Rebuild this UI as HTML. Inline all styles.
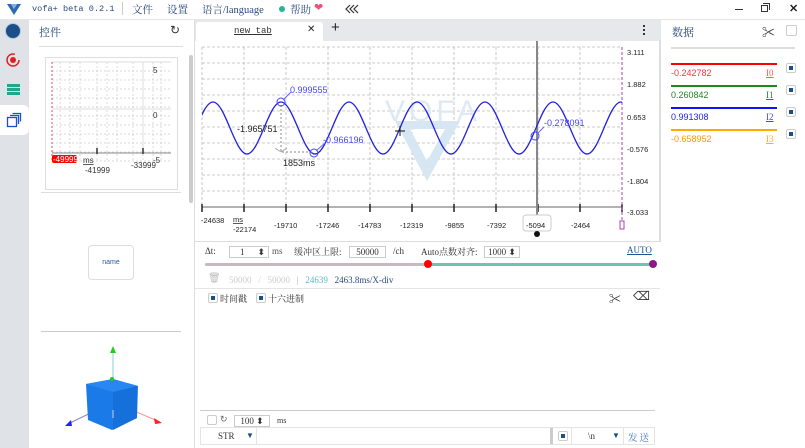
<!DOCTYPE html>
<html><head><meta charset="utf-8"><style>
*{margin:0;padding:0;box-sizing:border-box}
body{width:805px;height:448px;overflow:hidden;background:#fff;font-family:"Liberation Serif","Noto Serif CJK SC",serif;font-size:10px;color:#333;position:relative}
.a{position:absolute;white-space:nowrap}
.s{font-family:"Liberation Sans","Noto Sans CJK SC",sans-serif}
.hl{position:absolute;height:1px;background:#d6d6d6}
.cb{position:absolute;width:10px;height:10px;border:1px solid #ccc;border-radius:2px;background:#fff}
.cb i{position:absolute;left:2px;top:2px;width:4px;height:4px;background:#1a4f8a}
.inp{position:absolute;border:1px solid #ccc;height:12px;font-size:9px;text-align:center;line-height:10px;background:#fff}
</style></head><body>
<!-- top bar -->
<div class="a" style="left:0;top:0;width:805px;height:20px;background:#fff;border-bottom:1px solid #e6e6e6"></div>
<svg class="a" style="left:6px;top:3px" width="16" height="13" viewBox="0 0 16 13"><path d="M1 1 L8 12 L15 1 L11 1 L8 6 L5 1 Z" fill="#2a6ab0"/><path d="M5 1 L8 6 L11 1" fill="#7fb0e0"/></svg>
<div class="a" style="left:32px;top:4px;font-size:8.6px;color:#2a4a7a;font-family:'Liberation Mono',monospace">vofa+ beta 0.2.1</div>
<div class="a" style="left:122px;top:2px;width:1px;height:13px;background:#ccc"></div>
<div class="a" style="left:132px;top:2px;font-size:10.5px;color:#2a4a7a">文件</div>
<div class="a" style="left:167px;top:2px;font-size:10.5px;color:#2a4a7a">设置</div>
<div class="a" style="left:202px;top:2px;font-size:10.5px;color:#2a4a7a">语言/language</div>
<div class="a" style="left:279px;top:6px;width:6px;height:6px;border-radius:3px;background:#2bb39a"></div>
<div class="a" style="left:290px;top:2px;font-size:10.5px;color:#2a4a7a">帮助</div>
<div class="a" style="left:314px;top:1px;font-size:11px;color:#f0507a">❤</div>
<svg class="a" style="left:345px;top:4px" width="14" height="10"><path d="M5 1 L1 5 L5 9 M9 1 L5 5 L9 9 M13 1 L9 5 L13 9" stroke="#333" stroke-width="1.2" fill="none"/></svg>
<div class="a" style="left:735px;top:9px;width:8px;height:1px;background:#333"></div>
<div class="a" style="left:761px;top:5px;width:7px;height:7px;border:1px solid #333"></div>
<div class="a" style="left:763px;top:3px;width:7px;height:7px;border-top:1px solid #333;border-right:1px solid #333"></div>
<div class="a s" style="left:789px;top:2px;font-size:11px;color:#222;font-weight:bold">✕</div>

<!-- sidebar -->
<div class="a" style="left:0;top:20px;width:29px;height:428px;background:#dfe3e8"></div>
<div class="a" style="left:6px;top:24px;width:14px;height:14px;border-radius:7px;background:#1a4f8a;box-shadow:0 0 0 1px #b8c4d4"></div>
<svg class="a" style="left:5px;top:52px" width="16" height="16"><circle cx="8" cy="8" r="6" fill="none" stroke="#e02020" stroke-width="1.5" stroke-dasharray="30 8"/><circle cx="8" cy="8" r="3" fill="#e02020"/></svg>
<div class="a" style="left:7px;top:84px;width:13px;height:3px;background:#22a58c;box-shadow:0 4px 0 #22a58c,0 8px 0 #22a58c"></div>
<div class="a" style="left:0;top:105px;width:29px;height:30px;background:#fff;border-radius:0 6px 6px 0"></div>
<svg class="a" style="left:6px;top:112px" width="16" height="16"><rect x="1.5" y="5.5" width="9" height="9" fill="none" stroke="#1a50d0" stroke-width="1.3"/><path d="M4 3.5 H12.5 V12 M6.5 1.5 H14.5 V9.5" fill="none" stroke="#1a50d0" stroke-width="1.3"/></svg>

<!-- left panel -->
<div class="a" style="left:39px;top:24px;font-size:11px;color:#2a4a7a">控件</div>
<div class="a s" style="left:170px;top:23px;font-size:12px;color:#333">↻</div>
<div class="hl" style="left:39px;top:46px;width:144px;background:#ddd"></div>
<div class="a" style="left:189px;top:55px;width:4px;height:148px;background:#ccc;border-radius:2px"></div>
<div class="a" style="left:45px;top:57px;width:133px;height:133px;border:1px solid #ddd"></div>
<svg class="a" style="left:45px;top:57px" width="133" height="133">
<g stroke="#ccc" stroke-dasharray="2 2" stroke-width="0.7">
<path d="M7 5 H126 M7 14 H126 M7 23 H126 M7 32 H126 M7 41 H126 M7 50 H126 M7 59 H126 M7 68 H126 M7 77 H126 M7 86 H126 M7 95 H126 M7 104 H126"/>
<path d="M15 5V104 M25 5V104 M35 5V104 M52 5V104 M62 5V104 M72 5V104 M88 5V104 M98 5V104 M108 5V104 M116 5V104"/>
</g>
<path d="M7 5H126 M7 52H126 M7 96H126" stroke="#ddd"/>
<path d="M98 5V96" stroke="#ddd"/>
<path d="M7 5V104" stroke="#f44" stroke-dasharray="2 2"/>
<path d="M7 96H126" stroke="#888"/>
<path d="M52 91V97 M98 91V97" stroke="#333" stroke-width="1.5"/>
<rect x="7" y="98" width="25" height="8" rx="2" fill="#f00"/>
<text x="8" y="105" font-size="8" fill="#fff" font-family="Liberation Sans">-49999</text>
<text x="38" y="106" font-size="8" fill="#333" font-family="Liberation Sans" text-decoration="underline">ms</text>
<text x="40" y="116" font-size="8" fill="#333" font-family="Liberation Sans">-41999</text>
<text x="86" y="111" font-size="8" fill="#333" font-family="Liberation Sans">-33999</text>
<text x="108" y="16" font-size="8" fill="#333" font-family="Liberation Sans">5</text>
<text x="108" y="61" font-size="8" fill="#333" font-family="Liberation Sans">0</text>
<text x="108" y="106" font-size="8" fill="#333" font-family="Liberation Sans">-5</text>
</svg>
<div class="hl" style="left:41px;top:192px;width:140px;background:#ddd"></div>
<div class="a s" style="left:88px;top:245px;width:46px;height:35px;border:1px solid #ddd;border-radius:4px;font-size:7px;color:#2a5a9a;text-align:center;line-height:33px">name</div>
<div class="hl" style="left:41px;top:331px;width:140px;background:#ccc"></div>
<svg class="a" style="left:60px;top:340px" width="110" height="100">
<path d="M53 10 V72" stroke="#8cd" stroke-width="1"/>
<path d="M50 13 L53 6 L56 13 Z" fill="#2c2"/>
<path d="M53 62 L8 84" stroke="#88c"/><path d="M5 86 L11 80 L12 86 Z" fill="#22f"/>
<path d="M53 62 L100 82" stroke="#e99"/><path d="M102 83 L94 78 L95 84Z" fill="#f22"/>
<path d="M26 44 L53 39 L78 46 L77 78 L52 90 L28 80 Z" fill="#1a7ae8"/>
<path d="M26 44 L53 39 L78 46 L53 52 Z" fill="#2a86f0"/>
<path d="M53 52 V90 L77 78 V46 Z" fill="#1670dc"/>
<circle cx="52" cy="39" r="2" fill="#2c2"/>
<path d="M53 70 V78" stroke="#ccd"/>
</svg>

<!-- center -->
<div class="a" style="left:194px;top:20px;width:1px;height:428px;background:#ddd"></div>
<div class="a" style="left:195px;top:20px;width:466px;height:21px;background:#e6e8eb"></div>
<div class="a" style="left:196px;top:22px;width:127px;height:19px;background:#fff;border-radius:3px 3px 0 0"></div>
<div class="a" style="left:234px;top:26px;font-size:9px;color:#333;text-decoration:underline;font-family:'Liberation Mono',monospace">new tab</div>
<div class="a s" style="left:307px;top:24px;font-size:10px;color:#222">✕</div>
<div class="a s" style="left:331px;top:19px;font-size:15px;color:#222">+</div>
<div class="a" style="left:643px;top:25px;width:2px;height:2px;background:#333;box-shadow:0 4px 0 #333,0 8px 0 #333"></div>
<div class="a" style="left:659px;top:40px;width:2px;height:202px;background:#ddd"></div>
<svg class="a" style="left:195px;top:41px" width="465" height="200">
<defs><clipPath id="c"><rect x="7" y="0" width="420" height="200"/></clipPath></defs>
<g stroke="#bbb" stroke-dasharray="3 2" stroke-width="0.8">
<path d="M7 6H427 M7 22H427 M7 38H427 M7 54H427 M7 70H427 M7 86H427 M7 102H427 M7 118H427 M7 134H427 M7 150H427"/>
<path d="M7 6V166 M49 6V166 M91 6V166 M133 6V166 M175 6V166 M217 6V166 M259 6V166 M301 6V166 M343 6V166 M385 6V166"/>
</g>
<path d="M7 166H427" stroke="#666"/>
<g stroke="#222" stroke-width="1.5"><path d="M7 163V171 M49 163V171 M91 163V171 M133 163V171 M175 163V171 M217 163V171 M259 163V171 M301 163V171 M343 163V171 M385 163V171 M427 163V171"/></g>
<path d="M427 6V180" stroke="#b040b0" stroke-dasharray="3 2"/>
<!-- watermark -->
<text x="190" y="80" font-size="30" fill="#dde9f4" font-family="Liberation Sans" letter-spacing="4">VOFA</text>
<path d="M200 80 L265 80 L232 140 Z M215 88 L232 120 L250 88 Z" fill="#d6e6f2" fill-rule="evenodd"/>
<path d="M342 -1V195" stroke="#888" stroke-width="2"/>
<g clip-path="url(#c)">
<path d="M-16 113 C-3.8 113 5.8 61 18 61 S39.8 113 52 113 S73.8 61 86 61 S107.8 113 120 113 S141.8 61 154 61 S175.8 113 188 113 S209.8 61 222 61 S243.8 113 256 113 S277.8 61 290 61 S311.8 113 324 113 S345.8 61 358 61 S379.8 113 392 113 S413.8 61 426 61 S447.8 113 460 113" fill="none" stroke="#2222e0" stroke-width="1.3"/>
</g>
<path d="M86 64V111 H119" stroke="#888" stroke-dasharray="2 2" fill="none"/>
<path d="M80 107 L86 111 M92 107 L86 111" stroke="#aaa"/>
<circle cx="86" cy="61" r="4" fill="none" stroke="#44f"/>
<circle cx="119" cy="112" r="4" fill="none" stroke="#44f"/>
<circle cx="340" cy="95" r="4" fill="none" stroke="#44f"/>
<path d="M88 59 L96 51 M121 110 L130 102 M342 93 L349 86" stroke="#66f"/>
<g font-family="Liberation Sans" font-size="9">
<text x="95" y="52" fill="#44f">0.999555</text>
<text x="128" y="102" fill="#44f">-0.966196</text>
<text x="349" y="85" fill="#44f">-0.278091</text>
<text x="42" y="91" fill="#222">-1.965751</text>
<text x="88" y="125" fill="#222">1853ms</text>
<path d="M200 90 H210 M205 85 V95" stroke="#111"/>
</g>
<g font-family="Liberation Sans" font-size="7.5" fill="#222">
<text x="432" y="14">3.111</text><text x="432" y="46">1.882</text><text x="432" y="79">0.653</text><text x="432" y="111">-0.576</text><text x="432" y="143">-1.804</text><text x="432" y="174">-3.033</text>
<text x="6" y="182">-24638</text>
<text x="38" y="181" text-decoration="underline">ms</text>
<text x="38" y="191">-22174</text>
<text x="79" y="187">-19710</text><text x="121" y="187">-17246</text><text x="163" y="187">-14783</text><text x="205" y="187">-12319</text><text x="250" y="187">-9855</text><text x="292" y="187">-7392</text><text x="376" y="187">-2464</text>
</g>
<rect x="328" y="174" width="28" height="16" rx="3" fill="#fff" stroke="#ccc"/>
<text x="331" y="187" font-family="Liberation Sans" font-size="7.5" fill="#222">-5094</text>
<circle cx="342" cy="193" r="3" fill="#111"/>
<rect x="425" y="180" width="4" height="8" fill="none" stroke="#b040b0"/>
</svg>
<div class="hl" style="left:195px;top:241px;width:465px;background:#ddd"></div>
<!-- controls -->
<div class="a" style="left:205px;top:246px;font-size:9px">Δt:</div>
<div class="inp" style="left:229px;top:246px;width:40px;text-align:left;padding-left:10px">1 <span style="float:right;padding-right:3px">⬍</span></div>
<div class="a" style="left:272px;top:246px;font-size:9px;color:#555">ms</div>
<div class="a" style="left:294px;top:245px;font-size:9px">缓冲区上限:</div>
<div class="inp" style="left:349px;top:246px;width:37px">50000</div>
<div class="a" style="left:393px;top:246px;font-size:9px">/ch</div>
<div class="a" style="left:421px;top:245px;font-size:9px">Auto点数对齐:</div>
<div class="inp" style="left:484px;top:246px;width:36px">1000 ⬍</div>
<div class="a" style="left:627px;top:245px;font-size:9px;color:#1a4f9a;text-decoration:underline">AUTO</div>
<div class="a" style="left:205px;top:263px;width:223px;height:3px;background:#c9b8be;border-radius:2px"></div>
<div class="a" style="left:428px;top:263px;width:225px;height:3px;background:#6cc5b0"></div>
<div class="a" style="left:424px;top:260px;width:8px;height:8px;border-radius:4px;background:#f00"></div>
<div class="a" style="left:649px;top:260px;width:8px;height:8px;border-radius:4px;background:#8a1a8a"></div>
<div class="a s" style="left:208px;top:273px;font-size:10px;color:#bbb">🗑</div>
<div class="a" style="left:229px;top:275px;font-size:9px;color:#ccc">50000 &nbsp; / &nbsp; 50000 &nbsp; <span style="color:#aad">|</span> &nbsp; <span style="color:#5bb">24639</span> &nbsp; <span style="color:#2a4a7a">2463.8ms/X-div</span></div>
<div class="hl" style="left:195px;top:288px;width:465px;background:#e4e4e4"></div>
<div class="cb" style="left:208px;top:293px"><i></i></div>
<div class="a" style="left:220px;top:292px;font-size:9px">时间戳</div>
<div class="cb" style="left:256px;top:293px"><i></i></div>
<div class="a" style="left:268px;top:292px;font-size:9px">十六进制</div>
<div class="a s" style="left:609px;top:290px;font-size:12px;color:#333">✂</div>
<div class="a s" style="left:633px;top:289px;font-size:12px;color:#333">⌫</div>
<div class="hl" style="left:200px;top:410px;width:455px;background:#ccc"></div>
<div class="cb" style="left:207px;top:415px"></div>
<div class="a s" style="left:220px;top:414px;font-size:9px;color:#666">↻</div>
<div class="inp" style="left:234px;top:415px;width:36px">100 ⬍</div>
<div class="a" style="left:277px;top:416px;font-size:8px">ms</div>
<div class="a" style="left:200px;top:427px;width:455px;height:18px;border:1px solid #e4e4e4"></div>
<div class="a" style="left:256px;top:427px;width:1px;height:18px;background:#e4e4e4"></div>
<div class="a" style="left:218px;top:431px;font-size:9px">STR</div>
<div class="a s" style="left:246px;top:431px;font-size:8px;color:#1a4f8a">▼</div>
<div class="a" style="left:550px;top:428px;width:3px;height:16px;background:#ccc"></div>
<div class="cb" style="left:558px;top:431px"><i></i></div>
<div class="a" style="left:571px;top:427px;width:1px;height:18px;background:#e4e4e4"></div>
<div class="a" style="left:588px;top:431px;font-size:9px">\n</div>
<div class="a s" style="left:612px;top:431px;font-size:8px;color:#1a4f8a">▼</div>
<div class="a" style="left:623px;top:427px;width:1px;height:18px;background:#e4e4e4"></div>
<div class="a" style="left:628px;top:430px;font-size:9.5px;color:#4a7ac0;letter-spacing:2px">发送</div>

<!-- right panel -->
<div class="a" style="left:672px;top:24px;font-size:11px;color:#2a4a7a">数据</div>
<div class="a s" style="left:762px;top:22px;font-size:13px;color:#333">✂</div>
<div class="a" style="left:786px;top:25px;width:11px;height:11px;border:1px solid #ccc;border-radius:2px"></div>
<div class="hl" style="left:671px;top:47px;width:124px;height:2px;background:#ddd"></div>
<div class="a" style="left:671px;top:63px;width:106px;height:2px;background:#f00"></div>
<div class="a s" style="left:671px;top:68px;font-size:9px;color:#f33">-0.242782</div>
<div class="a" style="left:766px;top:68px;font-size:9px;color:#f55;text-decoration:underline">I0</div>
<div class="a" style="left:671px;top:85px;width:106px;height:2px;background:#1a8a1a"></div>
<div class="a s" style="left:671px;top:90px;font-size:9px;color:#282">0.260842</div>
<div class="a" style="left:766px;top:90px;font-size:9px;color:#282;text-decoration:underline">I1</div>
<div class="a" style="left:671px;top:107px;width:106px;height:2px;background:#11f"></div>
<div class="a s" style="left:671px;top:112px;font-size:9px;color:#22f">0.991308</div>
<div class="a" style="left:766px;top:112px;font-size:9px;color:#44f;text-decoration:underline">I2</div>
<div class="a" style="left:671px;top:129px;width:106px;height:2px;background:#fa0"></div>
<div class="a s" style="left:671px;top:134px;font-size:9px;color:#f90">-0.658952</div>
<div class="a" style="left:766px;top:134px;font-size:9px;color:#fa3;text-decoration:underline">I3</div>
<div class="cb" style="left:786px;top:63px"><i></i></div>
<div class="cb" style="left:786px;top:85px"><i></i></div>
<div class="cb" style="left:786px;top:107px"><i></i></div>
<div class="cb" style="left:786px;top:129px"><i></i></div>
</body></html>
